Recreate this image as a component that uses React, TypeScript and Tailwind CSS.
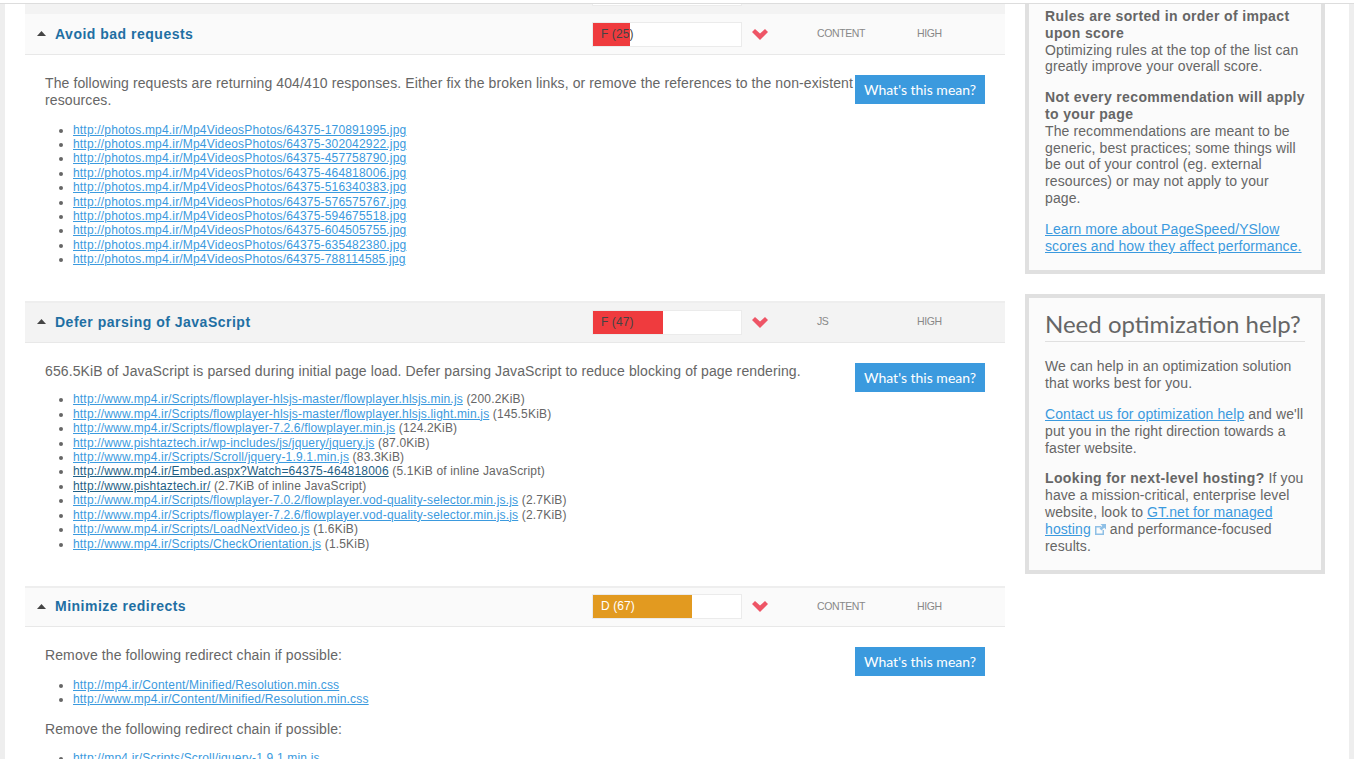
import React from "react";

type Row = { href: string; note?: string; dark?: boolean };

const photoIds = ["170891995", "302042922", "457758790", "464818006", "516340383", "576575767", "594675518", "604505755", "635482380", "788114585"];

const jsRows: Row[] = [
  { href: "http://www.mp4.ir/Scripts/flowplayer-hlsjs-master/flowplayer.hlsjs.min.js", note: "(200.2KiB)" },
  { href: "http://www.mp4.ir/Scripts/flowplayer-hlsjs-master/flowplayer.hlsjs.light.min.js", note: "(145.5KiB)" },
  { href: "http://www.mp4.ir/Scripts/flowplayer-7.2.6/flowplayer.min.js", note: "(124.2KiB)" },
  { href: "http://www.pishtaztech.ir/wp-includes/js/jquery/jquery.js", note: "(87.0KiB)" },
  { href: "http://www.mp4.ir/Scripts/Scroll/jquery-1.9.1.min.js", note: "(83.3KiB)" },
  { href: "http://www.mp4.ir/Embed.aspx?Watch=64375-464818006", note: "(5.1KiB of inline JavaScript)", dark: true },
  { href: "http://www.pishtaztech.ir/", note: "(2.7KiB of inline JavaScript)", dark: true },
  { href: "http://www.mp4.ir/Scripts/flowplayer-7.0.2/flowplayer.vod-quality-selector.min.js.js", note: "(2.7KiB)" },
  { href: "http://www.mp4.ir/Scripts/flowplayer-7.2.6/flowplayer.vod-quality-selector.min.js.js", note: "(2.7KiB)" },
  { href: "http://www.mp4.ir/Scripts/LoadNextVideo.js", note: "(1.6KiB)" },
  { href: "http://www.mp4.ir/Scripts/CheckOrientation.js", note: "(1.5KiB)" },
];

const Links = ({ rows }: { rows: Row[] }) => (
  <ul className="list-disc pl-[28px] text-[12px] leading-[14.4px] tracking-[0.18px] text-[#666]">
    {rows.map((r, i) => (
      <li key={i}>
        <a href="#" className={r.dark ? "text-[#1f5f85] underline" : "text-[#3b9ade] underline"}>
          {r.href}
        </a>
        {r.note ? ` ${r.note}` : ""}
      </li>
    ))}
  </ul>
);

const Chevron = () => (
  <svg width="16" height="11" viewBox="0 0 16 11" className="block">
    <path d="M0 3 L3 0 L8 4.5 L13 0 L16 3 L8 11 Z" fill="#ee5566" />
  </svg>
);

const Header = (props: {
  title: string;
  width: string;
  barColor: string;
  grade: string;
  gradeColor: string;
  bg: string;
  category: string;
  height: string;
}) => (
  <div className={`flex items-center border-b border-[#e8e8e8] ${props.height} ${props.bg}`}>
    <svg width="9" height="5" viewBox="0 0 9 5" className="ml-[12px] mt-[-1px] shrink-0">
      <path d="M0 5 L4.5 0 L9 5 Z" fill="#444" />
    </svg>
    <h3 className="ml-[9px] w-[537px] shrink-0 text-[14px] font-bold tracking-[0.5px] text-[#1f6fa3]">{props.title}</h3>
    <div className="relative h-[25px] w-[150px] shrink-0 border border-[#ebebeb] bg-white">
      <div className={`h-full ${props.width} ${props.barColor}`} />
      <span className={`absolute left-[8px] top-[3px] text-[12px] leading-[16px] tracking-[0.1px] ${props.gradeColor}`}>{props.grade}</span>
    </div>
    <div className="ml-[10px] w-[65px] shrink-0">
      <Chevron />
    </div>
    <span className="w-[100px] shrink-0 text-[10.5px] tracking-[-0.4px] text-[#888]">{props.category}</span>
    <span className="text-[10.5px] tracking-[-0.4px] text-[#888]">HIGH</span>
  </div>
);

const MeanButton = () => (
  <button className="mr-[20px] h-[29px] w-[130px] shrink-0 bg-[#3b9ade] font-['Lato',sans-serif] text-[14px] text-white">
    What's this mean?
  </button>
);

const para = "text-[14px] leading-[16.8px] tracking-[0.11px] text-[#666]";
const panel = "w-[300px] border-4 border-[#e0e0e0] bg-[#fbfbfb] px-[16px] text-[14px] leading-[16.8px] tracking-[0.1px] text-[#666]";
const boldCls = "font-bold tracking-[0.36px]";
const linkCls = "text-[#3b9ade] underline";

export default function App() {
  return (
    <div className="h-[759px] overflow-hidden bg-white pt-[3px] font-['Liberation_Sans',Arial,sans-serif]">
      <div className="h-full border-t border-[#dddddd] bg-[#eeeeee] px-[5px]">
        <div className="flex h-full gap-[20px] bg-white pl-[20px]">
          {/* rules */}
          <div className="w-[980px] shrink-0">
            <div className="h-[10px] bg-[#f3f3f3] pl-[567px]">
              <div className="h-[2px] w-[150px] border-x border-b border-[#ebebeb] bg-white" />
            </div>
            <Header title="Avoid bad requests" width="w-[25%]" barColor="bg-[#ef3b3e]" grade="F (25)" gradeColor="text-[#444]" bg="bg-[#fafafa]" category="CONTENT" height="h-[41px]" />
            <div className="flex pb-[34px] pl-[20px] pt-[20px]">
              <div className="w-[810px] shrink-0">
                <p className={para}>
                  The following requests are returning 404/410 responses. Either fix the broken links, or remove the references to the non-existent resources.
                </p>
                <div className="mt-[14px]">
                  <Links rows={photoIds.map((id) => ({ href: `http://photos.mp4.ir/Mp4VideosPhotos/64375-${id}.jpg` }))} />
                </div>
              </div>
              <MeanButton />
            </div>

            <div className="border-t-2 border-[#eeeeee]">
              <Header title="Defer parsing of JavaScript" width="w-[47%]" barColor="bg-[#ef3b3e]" grade="F (47)" gradeColor="text-[#444]" bg="bg-[#f3f3f3]" category="JS" height="h-[40px]" />
            </div>
            <div className="flex pb-[35px] pl-[20px] pt-[20px]">
              <div className="w-[810px] shrink-0">
                <p className={para}>
                  656.5KiB of JavaScript is parsed during initial page load. Defer parsing JavaScript to reduce blocking of page rendering.
                </p>
                <div className="mt-[13px]">
                  <Links rows={jsRows} />
                </div>
              </div>
              <MeanButton />
            </div>

            <div className="border-t-2 border-[#eeeeee]">
              <Header title="Minimize redirects" width="w-[67%]" barColor="bg-[#e29a20]" grade="D (67)" gradeColor="text-white" bg="bg-[#fafafa]" category="CONTENT" height="h-[39px]" />
            </div>
            <div className="flex pl-[20px] pt-[20px]">
              <div className="w-[810px] shrink-0">
                <p className={para}>Remove the following redirect chain if possible:</p>
                <div className="mt-[14px]">
                  <Links rows={[{ href: "http://mp4.ir/Content/Minified/Resolution.min.css" }, { href: "http://www.mp4.ir/Content/Minified/Resolution.min.css" }]} />
                </div>
                <p className={`mt-[14px] ${para}`}>Remove the following redirect chain if possible:</p>
                <div className="mt-[14px]">
                  <Links rows={[{ href: "http://mp4.ir/Scripts/Scroll/jquery-1.9.1.min.js" }]} />
                </div>
              </div>
              <MeanButton />
            </div>
          </div>

          {/* sidebar */}
          <div className="w-[300px] shrink-0">
            <div className={`${panel} border-t-0 pb-[16px] pt-[4px]`}>
              <p className={boldCls}>Rules are sorted in order of impact upon score</p>
              <p>Optimizing rules at the top of the list can greatly improve your overall score.</p>
              <p className={`mt-[14px] ${boldCls}`}>Not every recommendation will apply to your page</p>
              <p>The recommendations are meant to be generic, best practices; some things will be out of your control (eg. external resources) or may not apply to your page.</p>
              <p className="mt-[14px]">
                <a href="#" className={linkCls}>Learn more about PageSpeed/YSlow scores and how they affect performance.</a>
              </p>
            </div>
            <div className={`${panel} mt-[20px] pb-[16px] pt-[11px]`}>
              <h3 className="border-b border-[#e0e0e0] pb-[2px] font-['Lato',sans-serif] text-[24px] leading-[30px] tracking-normal text-[#666]">Need optimization help?</h3>
              <p className="mt-[16px]">We can help in an optimization solution that works best for you.</p>
              <p className="mt-[14px]">
                <a href="#" className={linkCls}>Contact us for optimization help</a> and we'll put you in the right direction towards a faster website.
              </p>
              <p className="mt-[14px]">
                <b className={boldCls}>Looking for next-level hosting?</b> If you have a mission-critical, enterprise level website, look to <a href="#" className={linkCls}>GT.net for managed hosting</a>{" "}
                <svg width="11" height="11" viewBox="0 0 11 11" className="inline-block align-[-1px]">
                  <path d="M0 2 H6 V3.5 H1.5 V9.5 H7.5 V6 H9 V11 H0 Z" fill="#8fc0e6" />
                  <path d="M5.5 0 H11 V5.5 L9.2 3.7 L6.5 6.5 L4.5 4.5 L7.3 1.8 Z" fill="#8fc0e6" />
                </svg>{" "}
                and performance-focused results.
              </p>
            </div>
          </div>
        </div>
      </div>
    </div>
  );
}
